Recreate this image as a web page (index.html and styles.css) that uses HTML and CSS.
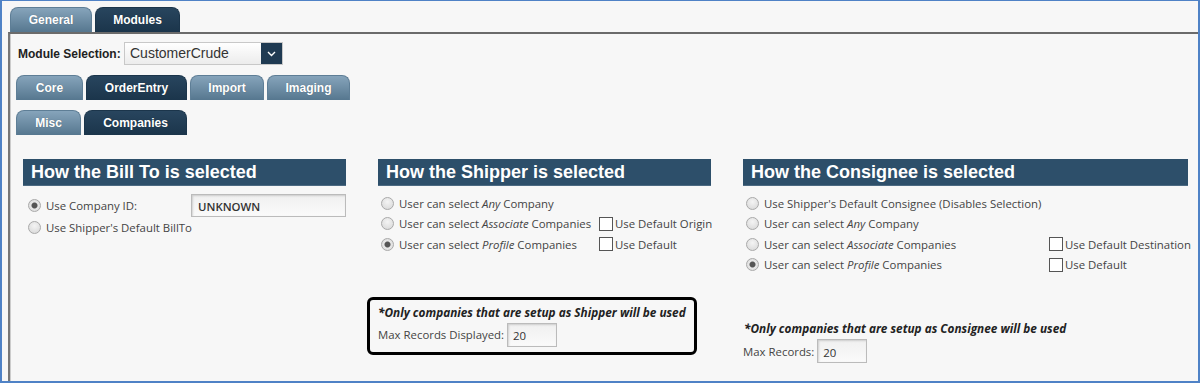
FILE: index.html
```html
<!DOCTYPE html>
<html lang="en">
<head>
  <meta charset="UTF-8">
  <title>Modules - Companies</title>
  <link rel="stylesheet" href="styles.css">
</head>
<body>
  <div class="frame">
    <div class="tabs top-tabs">
      <div class="tab">General</div>
      <div class="tab active">Modules</div>
    </div>

    <div class="panel">
      <div class="module-row">
        <label class="module-label">Module Selection:</label>
        <div class="select">
          <span class="select-text">CustomerCrude</span>
          <span class="select-btn">
            <svg width="9" height="6" viewBox="0 0 9 6"><path d="M1 1 L4.5 4.5 L8 1" fill="none" stroke="#fff" stroke-width="1.4"/></svg>
          </span>
        </div>
      </div>

      <div class="tabs sub-tabs">
        <div class="tab w-core">Core</div>
        <div class="tab active w-order">OrderEntry</div>
        <div class="tab w-import">Import</div>
        <div class="tab w-imaging">Imaging</div>
      </div>
      <div class="tabs sub-tabs second">
        <div class="tab w-misc">Misc</div>
        <div class="tab active w-companies">Companies</div>
      </div>

      <div class="columns">
        <!-- Bill To -->
        <div class="col">
          <h3 class="col-head">How the Bill To is selected</h3>
          <div class="billto">
            <div class="opt">
              <input type="radio" name="billto" checked>
              <span class="opt-text company-id">Use Company ID:</span>
              <input type="text" class="text-input company-input" value="UNKNOWN">
            </div>
            <div class="opt">
              <input type="radio" name="billto">
              <span class="opt-text">Use Shipper's Default BillTo</span>
            </div>
          </div>
        </div>

        <!-- Shipper -->
        <div class="col">
          <h3 class="col-head">How the Shipper is selected</h3>
          <div class="opts shipper-opts">
            <div class="opt"><input type="radio" name="shipper"><span class="opt-text">User can select <i>Any</i> Company</span></div>
            <div></div>
            <div class="opt"><input type="radio" name="shipper"><span class="opt-text">User can select <i>Associate</i> Companies</span></div>
            <div class="check"><input type="checkbox"><span>Use Default Origin</span></div>
            <div class="opt"><input type="radio" name="shipper" checked><span class="opt-text">User can select <i>Profile</i> Companies</span></div>
            <div class="check"><input type="checkbox"><span>Use Default</span></div>
          </div>
          <div class="note-box">
            <p class="note">*Only companies that are setup as Shipper will be used</p>
            <div class="max-row">
              <span>Max Records Displayed:</span>
              <input type="text" class="text-input max-input" value="20">
            </div>
          </div>
        </div>

        <!-- Consignee -->
        <div class="col">
          <h3 class="col-head">How the Consignee is selected</h3>
          <div class="opts consignee-opts">
            <div class="opt"><input type="radio" name="consignee"><span class="opt-text">Use Shipper's Default Consignee (Disables Selection)</span></div>
            <div></div>
            <div class="opt"><input type="radio" name="consignee"><span class="opt-text">User can select <i>Any</i> Company</span></div>
            <div></div>
            <div class="opt"><input type="radio" name="consignee"><span class="opt-text">User can select <i>Associate</i> Companies</span></div>
            <div class="check"><input type="checkbox"><span>Use Default Destination</span></div>
            <div class="opt"><input type="radio" name="consignee" checked><span class="opt-text">User can select <i>Profile</i> Companies</span></div>
            <div class="check"><input type="checkbox"><span>Use Default</span></div>
          </div>
          <div class="consignee-note">
            <p class="note">*Only companies that are setup as Consignee will be used</p>
            <div class="max-row">
              <span>Max Records:</span>
              <input type="text" class="text-input max-input" value="20">
            </div>
          </div>
        </div>
      </div>
    </div>
  </div>
</body>
</html>
```

FILE: styles.css
```css
* {
  box-sizing: border-box;
}

body {
  margin: 0;
  font-family: 'Open Sans', 'Noto Sans', sans-serif;
  font-size: 11.4px;
  color: #444;
}

.frame {
  width: 1200px;
  height: 383px;
  border: 2px solid #4f82c6;
  border-top-width: 1px;
  background: #f7f7f7;
  padding: 6px 0 0 6px;
  overflow: hidden;
}

/* tabs */
.tabs {
  display: flex;
  gap: 3px;
  height: 25px;
}

.top-tabs {
  padding-left: 2px;
}

.tab {
  height: 25px;
  border-radius: 8px 8px 0 0;
  background: linear-gradient(#86a4bb, #56778f);
  color: #fff;
  font-family: 'Liberation Sans', Arial, sans-serif;
  font-weight: bold;
  font-size: 12px;
  line-height: 25px;
  text-align: center;
  text-shadow: 0 0 1px rgba(0, 0, 0, 0.3);
  border: 1px solid #5e7e96;
  border-bottom: none;
}

.tab.active {
  background: linear-gradient(#28455e, #1b354b);
  border-color: #1b354b;
}

.top-tabs .tab:first-child { width: 82px; }
.top-tabs .tab.active { width: 85px; }

.panel {
  border-top: 2px solid #6b6b6b;
  border-left: 2px solid #777;
  box-shadow: inset 1px 0 0 #ccc;
  height: 400px;
  padding: 8px 0 0 8px;
}

.module-row {
  display: flex;
  align-items: center;
  height: 23px;
}

.module-label {
  font-family: 'Liberation Sans', Arial, sans-serif;
  font-weight: bold;
  font-size: 12px;
  color: #222;
  width: 106px;
}

.select {
  display: flex;
  width: 159px;
  height: 23px;
  border: 1px solid #c8c8c8;
  background: linear-gradient(#ffffff, #ececec);
}

.select-text {
  flex: 1;
  font-family: 'Liberation Sans', Arial, sans-serif;
  font-size: 14px;
  color: #333;
  line-height: 21px;
  padding-left: 5px;
}

.select-btn {
  width: 21px;
  background: #1f3a52;
  display: flex;
  align-items: center;
  justify-content: center;
}

.sub-tabs {
  margin-top: 10px;
  margin-left: -2px;
}

.w-core { width: 67px; }
.w-order { width: 101px; }
.w-import { width: 74px; }
.w-imaging { width: 83px; }
.w-misc { width: 65px; }
.w-companies { width: 103px; }

/* columns */
.columns {
  display: grid;
  grid-template-columns: 323px 333px 445px;
  column-gap: 32px;
  margin-top: 24px;
  padding-left: 5px;
}

.col-head {
  margin: 0;
  height: 27px;
  background: #2d4f6a;
  color: #fff;
  font-family: 'Liberation Sans', Arial, sans-serif;
  font-weight: bold;
  font-size: 18px;
  line-height: 27px;
  padding-left: 8px;
  border-bottom: 1px solid #4c6a82;
}

.opt {
  display: flex;
  align-items: center;
  height: 20.5px;
  white-space: nowrap;
}

.opt-text {
  margin-left: 5px;
}

.billto {
  margin-top: 7px;
  padding-left: 5px;
}

.billto .opt:first-child {
  height: 24px;
}

.company-id {
  width: 145px;
}

.company-input {
  width: 155px;
  height: 23px;
}

.opts {
  display: grid;
  margin-top: 7px;
  padding-left: 3px;
}

.shipper-opts {
  grid-template-columns: 218px 1fr;
}

.consignee-opts {
  grid-template-columns: 303px 1fr;
}

.check {
  display: flex;
  align-items: center;
  height: 20.5px;
  white-space: nowrap;
}

.check span {
  margin-left: 2px;
}

input[type="radio"] {
  appearance: none;
  margin: 0;
  width: 13px;
  height: 13px;
  border-radius: 50%;
  border: 1px solid #a9a9a9;
  background: radial-gradient(circle at 50% 35%, #f4f4f4, #d6d6d6);
  flex-shrink: 0;
}

input[type="radio"]:checked {
  background: radial-gradient(circle, #555 0 2.5px, #e8e8e8 3.5px, #d6d6d6);
}

input[type="checkbox"] {
  appearance: none;
  margin: 0;
  width: 14px;
  height: 14px;
  border: 1px solid #555;
  background: #fff;
  flex-shrink: 0;
}

.text-input {
  font-family: 'Open Sans', 'Noto Sans', sans-serif;
  font-size: 11.4px;
  color: #333;
  border: 1px solid #bbb;
  background: linear-gradient(#f0f0f0, #fafafa);
  box-shadow: inset 1px 1px 2px rgba(0, 0, 0, 0.15);
  padding: 2px 0 0 5px;
}

.company-input {
  font-weight: 600;
  padding-left: 6px;
}

/* notes */
.note {
  margin: 0;
  font-weight: bold;
  font-style: italic;
  color: #222;
  font-size: 11.8px;
}

.note-box {
  margin-top: 42px;
  margin-left: -11px;
  width: 330px;
  height: 58px;
  border: 3px solid #000;
  border-radius: 6px;
  padding: 4px 0 0 8px;
}

.max-row {
  display: flex;
  align-items: center;
  gap: 3px;
  margin-top: 3px;
}

.max-input {
  width: 50px;
  height: 24px;
}

.consignee-note {
  margin-top: 45px;
}

.consignee-note .note {
  margin-left: 1px;
}
```
